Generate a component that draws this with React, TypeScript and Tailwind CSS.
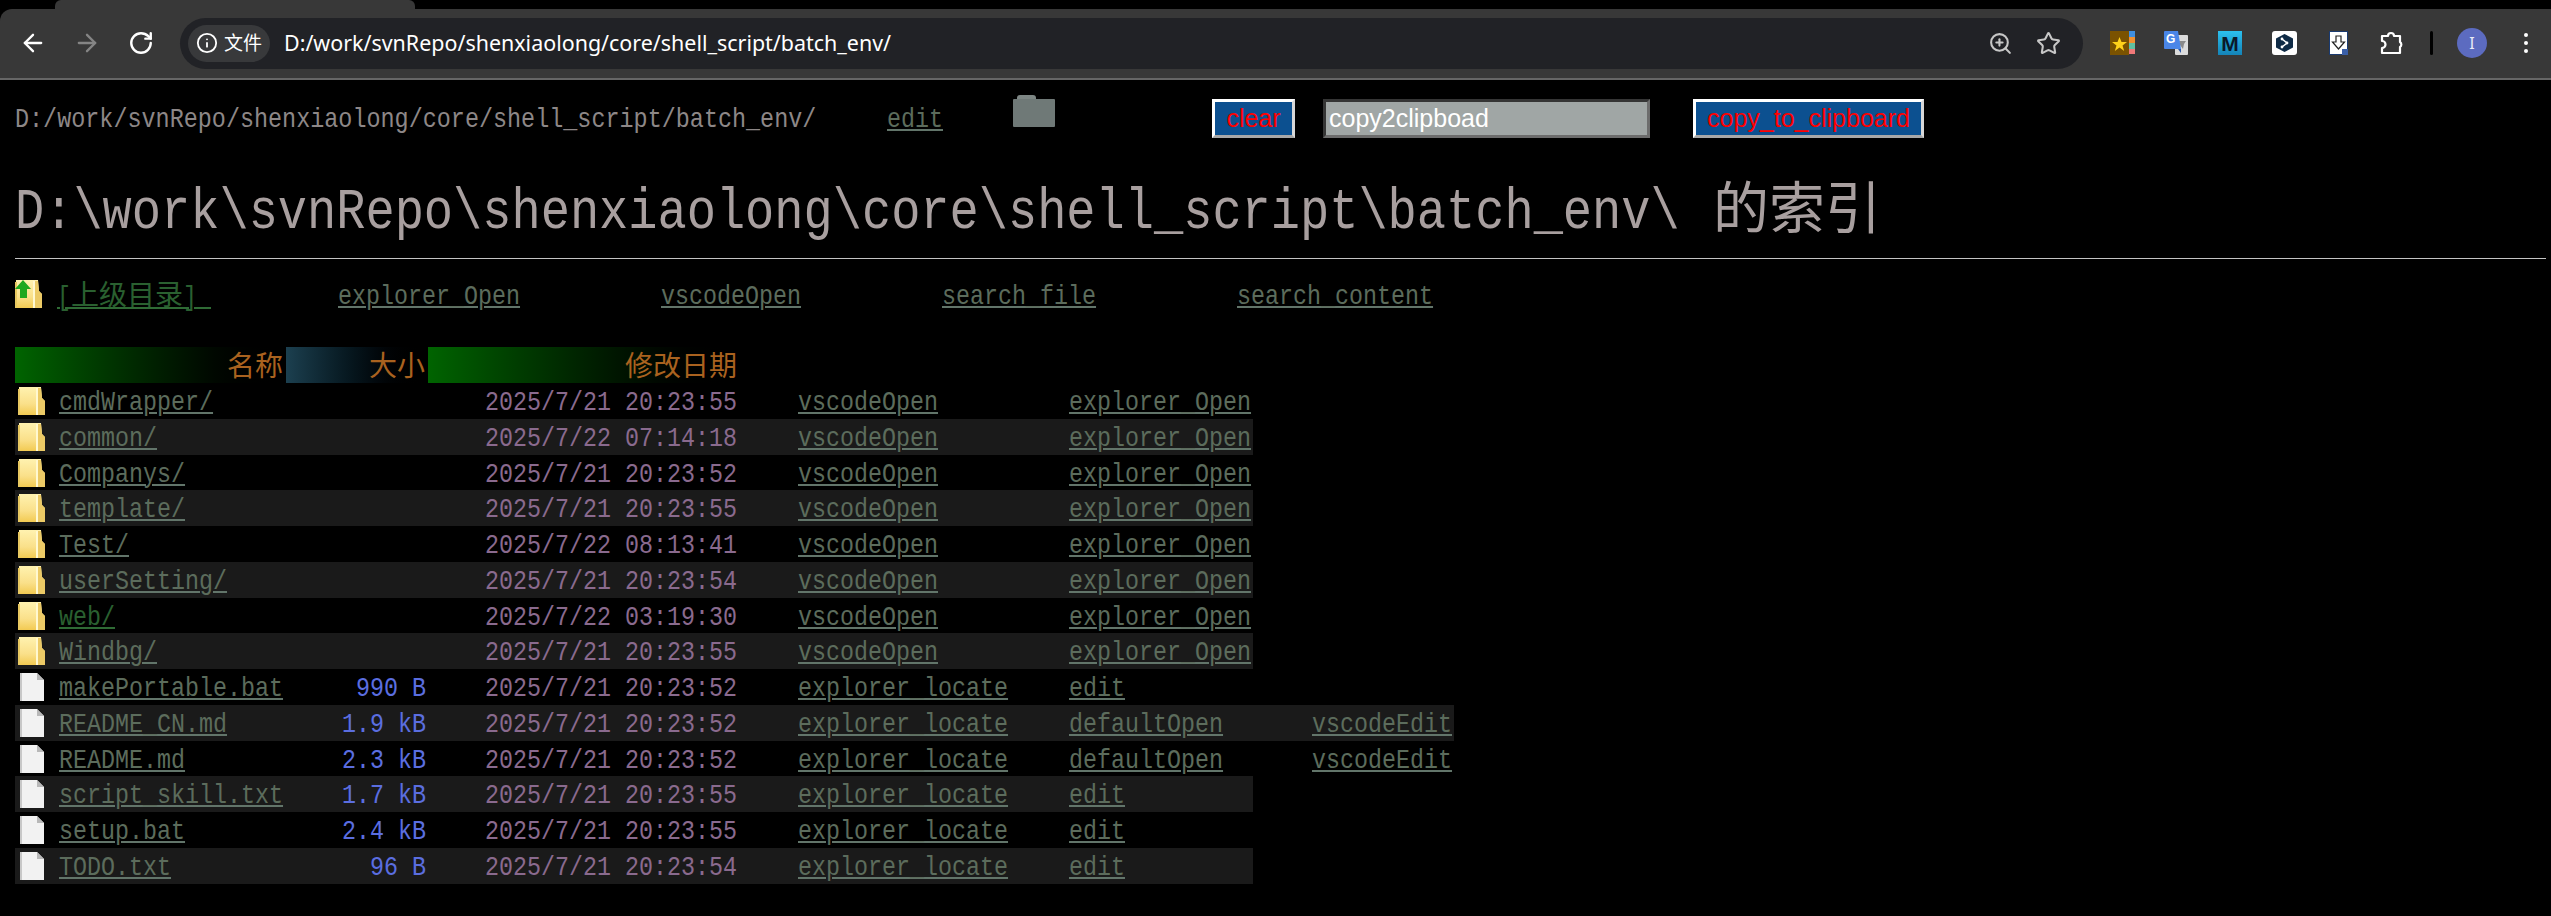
import React from "react";
import { ArrowLeft, ArrowRight, RotateCw, Info, ZoomIn, Star } from "lucide-react";

const T = ({ s, c = "" }: { s: string; c?: string }) => (
  <span className={`inline-block whitespace-pre origin-left scale-x-[0.8333] ${c}`} style={{ width: s.length * 14 }}>
    {s}
  </span>
);

const LINK = "text-[#5c6c5c] underline decoration-[#62756a] decoration-2 underline-offset-[2px]";
const VISITED = "text-[#2a6030] underline decoration-[#2f6b35] decoration-2 underline-offset-[2px]";
const L = ({ s }: { s: string }) => <T s={s} c={LINK} />;

const FolderIcon = ({ arrow = false }: { arrow?: boolean }) => (
  <svg width="27" height="28" viewBox="0 0 27 28" className="block shrink-0">
    <defs>
      <linearGradient id={arrow ? "fa" : "fb"} x1="0" y1="0" x2="0" y2="1">
        <stop offset="0" stopColor="#fff2b0" />
        <stop offset="0.6" stopColor="#fae08a" />
        <stop offset="1" stopColor="#f2ca52" />
      </linearGradient>
    </defs>
    <path d="M1 0h22l1 11 3 3v14H1z" fill={`url(#${arrow ? "fa" : "fb"})`} />
    <path d="M0 2h2v26H0z" fill="#e8c860" />
    <path d="M18 1h2v27h-2z" fill="#fff8d0" />
    <path d="M20 1h3l1 10 3 3v14h-7z" fill="#ecca66" />
    {arrow && <path d="M8 0l8 9h-4v9H5V9H0z" fill="#1fa81f" />}
  </svg>
);

const FileIcon = () => (
  <svg width="25" height="28" viewBox="0 0 25 28" className="block shrink-0 ml-[2px]">
    <path d="M0 0h17l7 7v21H0z" fill="#f2f2f2" />
    <path d="M17 0l7 7h-7z" fill="#b8b8b8" />
    <path d="M0 0h2v28H0z" fill="#c8c8c8" />
  </svg>
);

type Row = { n: string; s?: string; d: string; a: string; b: string; e?: string; v?: boolean };
const rows: Row[] = [
  { n: "cmdWrapper/", d: "2025/7/21 20:23:55", a: "vscodeOpen", b: "explorer_Open" },
  { n: "common/", d: "2025/7/22 07:14:18", a: "vscodeOpen", b: "explorer_Open" },
  { n: "Companys/", d: "2025/7/21 20:23:52", a: "vscodeOpen", b: "explorer_Open" },
  { n: "template/", d: "2025/7/21 20:23:55", a: "vscodeOpen", b: "explorer_Open" },
  { n: "Test/", d: "2025/7/22 08:13:41", a: "vscodeOpen", b: "explorer_Open" },
  { n: "userSetting/", d: "2025/7/21 20:23:54", a: "vscodeOpen", b: "explorer_Open" },
  { n: "web/", d: "2025/7/22 03:19:30", a: "vscodeOpen", b: "explorer_Open", v: true },
  { n: "Windbg/", d: "2025/7/21 20:23:55", a: "vscodeOpen", b: "explorer_Open" },
  { n: "makePortable.bat", s: "990 B", d: "2025/7/21 20:23:52", a: "explorer_locate", b: "edit" },
  { n: "README_CN.md", s: "1.9 kB", d: "2025/7/21 20:23:52", a: "explorer_locate", b: "defaultOpen", e: "vscodeEdit" },
  { n: "README.md", s: "2.3 kB", d: "2025/7/21 20:23:52", a: "explorer_locate", b: "defaultOpen", e: "vscodeEdit" },
  { n: "script_skill.txt", s: "1.7 kB", d: "2025/7/21 20:23:55", a: "explorer_locate", b: "edit" },
  { n: "setup.bat", s: "2.4 kB", d: "2025/7/21 20:23:55", a: "explorer_locate", b: "edit" },
  { n: "TODO.txt", s: "96 B", d: "2025/7/21 20:23:54", a: "explorer_locate", b: "edit" },
];

const CJK = "font-['Noto_Sans_CJK_SC','Liberation_Mono',sans-serif]";

const Browser = () => (
  <div className="font-['Noto_Sans','Noto_Sans_CJK_SC',sans-serif]">
    <div className="h-[9px] bg-black">
      <div className="ml-[55px] w-[360px] h-[9px] bg-[#383838] rounded-t-[6px]" />
    </div>
    <div className="h-[71px] bg-[#383838] border-b-2 border-[#666666] rounded-tl-[12px] flex items-center pl-[6px] pb-[1px]">
      <div className="w-[54px] flex justify-center text-white"><ArrowLeft size={28} strokeWidth={2} /></div>
      <div className="w-[54px] flex justify-center text-[#858585]"><ArrowRight size={28} strokeWidth={2} /></div>
      <div className="w-[54px] flex justify-center text-white"><RotateCw size={26} strokeWidth={2.2} /></div>
      <div className="ml-[12px] w-[1903px] h-[51px] rounded-full bg-[#212226] flex items-center pl-[8px] pr-[11px]">
        <div className="w-[82px] h-[37px] rounded-full bg-[#38393b] flex items-center pl-[8px] gap-[6px] text-white text-[20px]">
          <Info size={22} strokeWidth={2} />
          <span className="text-[19px]">文件</span>
        </div>
        <span className="ml-[14px] text-white text-[21.45px] whitespace-pre">D:/work/svnRepo/shenxiaolong/core/shell_script/batch_env/</span>
        <div className="ml-auto w-[48px] flex justify-center text-[#c7c7c7]"><ZoomIn size={25} strokeWidth={2} /></div>
        <div className="w-[48px] flex justify-center text-[#c7c7c7]"><Star size={25} strokeWidth={2} /></div>
      </div>
      <div className="ml-[12px] w-[54px] flex justify-center">
        <svg width="25" height="24" viewBox="0 0 25 24">
          <rect width="19" height="24" fill="#7a5200" />
          <rect x="19" width="6" height="6" fill="#3f8fe0" />
          <rect x="19" y="6" width="6" height="6" fill="#f09030" />
          <rect x="19" y="12" width="6" height="6" fill="#60c0a0" />
          <rect x="19" y="18" width="6" height="5" fill="#f07878" />
          <path d="M9.5 6l2 5h5.5l-4.5 3.400 1.700 5.600-4.700-3.400-4.700 3.400 1.700-5.600L2 11h5.500z" fill="#ffd21a" />
        </svg>
      </div>
      <div className="w-[54px] flex justify-center">
        <div className="relative w-[24px] h-[24px]">
          <svg width="24" height="24" viewBox="0 0 24 24" className="block">
            <rect x="11" y="4" width="13" height="20" rx="1" fill="#dcdcdc" />
            <path d="M15 10h7l-2 3-1 5-3-4z" fill="#8a8a8a" />
            <path d="M1 0h13l3 18H1a1 1 0 0 1-1-1V1a1 1 0 0 1 1-1z" fill="#4a86e8" />
            <path d="M14 18l3 4v-4z" fill="#2a56a8" />
          </svg>
          <span className="absolute left-[2px] top-[0px] text-white text-[12px] leading-[17px] font-bold font-['Liberation_Sans',sans-serif]">G</span>
        </div>
      </div>
      <div className="w-[54px] flex justify-center">
        <div className="w-[24px] h-[24px] bg-linear-to-b from-[#2cc0ee] to-[#1484b8] flex items-center justify-center text-[#0a1a2a] text-[21px] leading-none font-bold font-['Liberation_Sans',sans-serif]">M</div>
      </div>
      <div className="w-[54px] flex justify-center">
        <svg width="25" height="24" viewBox="0 0 25 24">
          <rect width="25" height="24" rx="3" fill="#ffffff" />
          <path d="M12.500 3l8.500 4.500v9L12.500 21 4 16.500v-9z" fill="#0f2b46" />
          <path d="M10 8l5 4-5 4" fill="none" stroke="#ffffff" strokeWidth="1.500" />
          <circle cx="10" cy="8" r="1.400" fill="#ffffff" />
          <circle cx="15" cy="12" r="1.400" fill="#ffffff" />
          <circle cx="10" cy="16" r="1.400" fill="#ffffff" />
        </svg>
      </div>
      <div className="w-[54px] flex justify-center">
        <svg width="19" height="24" viewBox="0 0 19 24">
          <rect width="19" height="24" rx="1" fill="#ffffff" />
          <rect x="0.500" y="0.500" width="18" height="23" fill="none" stroke="#1a3a70" />
          <path d="M7 5h5v6h3.500L9.500 18 3.500 11H7z" fill="#ffffff" stroke="#222222" strokeWidth="1.200" />
          <rect x="13" y="18" width="6" height="6" fill="#3a5fa8" />
        </svg>
      </div>
      <div className="w-[54px] flex justify-center">
        <svg width="25" height="24" viewBox="0 0 25 24" fill="none" stroke="#ffffff" strokeWidth="2.200" strokeLinejoin="round">
          <path d="M2 5h6a3 3 0 0 1 6 0h6v6a3 3 0 0 1 0 5v6H2v-5a3.500 3.500 0 0 0 0-7z" />
        </svg>
      </div>
      <div className="w-[24px] flex justify-center"><div className="w-[3px] h-[24px] rounded-full bg-black" /></div>
      <div className="w-[58px] flex justify-center">
        <div className="w-[30px] h-[30px] rounded-full bg-[#5c6bc0] flex items-center justify-center text-[#e8eaf6] text-[16px]">I</div>
      </div>
      <div className="w-[50px] flex flex-col items-center gap-[4px]">
        <div className="w-[4px] h-[4px] rounded-full bg-white" />
        <div className="w-[4px] h-[4px] rounded-full bg-white" />
        <div className="w-[4px] h-[4px] rounded-full bg-white" />
      </div>
    </div>
  </div>
);

const BTN = "mt-[19px] h-[39px] border-[3px] border-t-white border-l-white border-r-[#d8d8d8] border-b-[#a8a8a8] bg-[#0c5090] text-[#ff0000] text-[25px] leading-none font-['Liberation_Sans',sans-serif] p-0 text-center";
const CELL = "h-[35.75px] pt-[2px]";

export default function App() {
  return (
    <div className="h-[916px] overflow-hidden bg-black font-['Liberation_Mono','Noto_Sans_CJK_SC',monospace] text-[28px] leading-[36px]">
      <Browser />
      <div className="flex h-[96px] pl-[15px] items-start">
        <div className="mt-[22px] w-[798px] text-[#8d8787]">
          <span className="inline-block whitespace-pre origin-left scale-x-[0.8367] w-[798px]">D:/work/svnRepo/shenxiaolong/core/shell_script/batch_env/</span>
        </div>
        <div className="mt-[22px] ml-[74px] w-[56px]"><L s="edit" /></div>
        <svg width="42" height="32" viewBox="0 0 42 32" className="block mt-[15px] ml-[70px] shrink-0">
          <path d="M4 3a3 3 0 0 1 3-3h13a3 3 0 0 1 3 3v1H4z" fill="#7d8684" />
          <rect y="4" width="42" height="28" rx="1" fill="#6f7977" />
        </svg>
        <button className={`${BTN} ml-[157px] w-[83px]`}>clear</button>
        <input
          readOnly
          value="copy2clipboad"
          className="mt-[19px] ml-[28px] w-[327px] h-[39px] border-[3px] border-t-[#353535] border-l-[#353535] border-r-[#6c6c6c] border-b-[#6c6c6c] bg-[#a0a6a5] text-white text-[25px] pl-[3px] font-['Liberation_Sans',sans-serif] outline-none"
        />
        <button className={`${BTN} ml-[43px] w-[231px]`}>copy_to_clipboard</button>
      </div>
      <h1 className="pl-[15px] h-[72px] text-[58.24px] leading-[67px] text-[#a89f9f] whitespace-pre font-normal">
        <span className="inline-block whitespace-pre origin-left scale-x-[0.8357] w-[1698px]">{"D:\\work\\svnRepo\\shenxiaolong\\core\\shell_script\\batch_env\\ "}</span>
        <span className={`${CJK} leading-none text-[56px]`}>的索引</span>
      </h1>
      <div className="mt-[10px] ml-[15px] mr-[5px] h-px bg-[#c4c4c4]" />
      <div className="mt-[20px] mb-[32px] h-[36px] pl-[15px] flex items-start">
        <div className="mt-px w-[42px]"><FolderIcon arrow /></div>
        <div className="whitespace-pre w-[154px]">
          <T s="[" c={VISITED} />
          <span className={`${CJK} leading-none ${VISITED}`}>上级目录</span>
          <T s="] " c={VISITED} />
        </div>
        <div className="ml-[127px]"><L s="explorer_Open" /></div>
        <div className="ml-[141px]"><L s="vscodeOpen" /></div>
        <div className="ml-[141px]"><L s="search_file" /></div>
        <div className="ml-[141px]"><L s="search_content" /></div>
      </div>
      <table className="ml-[15px] w-[1439px] table-fixed border-collapse">
        <colgroup>
          <col className="w-[271px]" />
          <col className="w-[142px]" />
          <col className="w-[312px]" />
          <col className="w-[327px]" />
          <col className="w-[186px]" />
          <col className="w-[201px]" />
        </colgroup>
        <thead>
          <tr className="h-[36px]">
            <th className={`p-0 pr-[3px] text-right font-normal leading-[34px] pb-[2px] text-[#a9621f] ${CJK} bg-linear-to-r from-[#006400] to-black`}>名称</th>
            <th className={`p-0 pr-[3px] text-right font-normal leading-[34px] pb-[2px] text-[#a9621f] ${CJK} bg-linear-to-r from-[#1c4050] to-black`}>大小</th>
            <th className={`p-0 pr-[3px] text-right font-normal leading-[34px] pb-[2px] text-[#a9621f] ${CJK} bg-linear-to-r from-[#006400] to-black`}>修改日期</th>
          </tr>
        </thead>
        <tbody>
          {rows.map((r, i) => (
            <tr key={r.n} className={i % 2 === 1 ? "bg-[#1a1a1a]" : ""}>
              <td className="p-0 align-top">
                <div className="flex items-start h-[35.75px]">
                  <div className="ml-[3px] mt-[4px] w-[41px]">{r.s ? <FileIcon /> : <FolderIcon />}</div>
                  <T s={r.n} c={`${r.v ? VISITED : LINK} mt-[2px]`} />
                </div>
              </td>
              <td className="p-0 pr-[2px] align-top">
                <div className={`flex justify-end text-[#5b6ee0] ${CELL}`}>{r.s && <T s={r.s} />}</div>
              </td>
              <td className="p-0 pr-[3px] align-top">
                <div className={`flex justify-end text-[#8a6a8e] ${CELL}`}><T s={r.d} /></div>
              </td>
              <td className="p-0 pl-[58px] align-top"><div className={CELL}><L s={r.a} /></div></td>
              <td className="p-0 pl-[2px] align-top"><div className={CELL}><L s={r.b} /></div></td>
              {r.e && <td className="p-0 pl-[59px] align-top"><div className={CELL}><L s={r.e} /></div></td>}
            </tr>
          ))}
        </tbody>
      </table>
    </div>
  );
}
